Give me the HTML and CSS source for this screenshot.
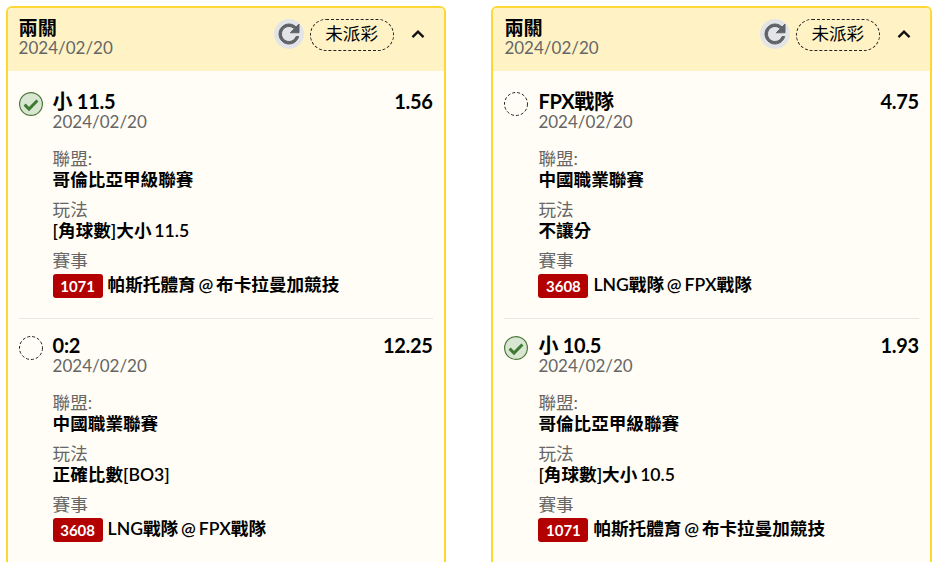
FILE: index.html
```html
<!DOCTYPE html>
<html lang="zh-Hant">
<head>
<meta charset="utf-8">
<title>兩關</title>
<link rel="stylesheet" href="styles.css">
</head>
<body>
<svg class="defs" width="0" height="0" aria-hidden="true">
  <symbol id="ok" viewBox="0 0 24 24">
    <circle cx="12" cy="12" r="11.4" fill="#d9e6d2" stroke="#4c7a3d" stroke-width="1.2"/>
    <path d="M5.6 12.6l4.4 4.4 8.4-8.5" fill="none" stroke="#3f7a32" stroke-width="3"/>
  </symbol>
  <symbol id="pending" viewBox="0 0 24 24">
    <circle cx="12" cy="12" r="11.5" fill="none" stroke="#222" stroke-width="1" stroke-dasharray="3 2"/>
  </symbol>
  <symbol id="refresh" viewBox="0 0 24 24">
    <path d="M17.65 6.35C16.2 4.9 14.21 4 12 4c-4.42 0-7.99 3.58-7.99 8s3.57 8 7.99 8c3.73 0 6.84-2.55 7.73-6h-2.08c-.82 2.33-3.04 4-5.65 4-3.31 0-6-2.69-6-6s2.69-6 6-6c1.66 0 3.14.69 4.22 1.78L13 11h7V4l-2.35 2.35z" fill="#5f6368" stroke="#5f6368" stroke-width=".8"/>
  </symbol>
  <symbol id="up" viewBox="0 0 14 10">
    <path d="M1.5 8.2l5.5-5.5 5.5 5.5" fill="none" stroke="#111" stroke-width="2.4"/>
  </symbol>
</svg>
<main class="board">
  <section class="card">
    <header class="head">
      <div class="head-text">
        <div class="head-title">兩關</div>
        <div class="date">2024/02/20</div>
      </div>
      <span class="refresh"><svg class="refresh-icon"><use href="#refresh"/></svg></span>
      <span class="status">未派彩</span>
      <svg class="chevron"><use href="#up"/></svg>
    </header>
    <div class="body">
      <article class="leg">
        <svg class="mark"><use href="#ok"/></svg>
        <div class="leg-main">
          <div class="leg-top"><span>小 11.5</span><span>1.56</span></div>
          <div class="date">2024/02/20</div>
          <div class="label first">聯盟:</div>
          <div class="value">哥倫比亞甲級聯賽</div>
          <div class="label">玩法</div>
          <div class="value">[角球數]大小 11.5</div>
          <div class="label">賽事</div>
          <div class="match"><span class="code">1071</span><span class="value">帕斯托體育 @ 布卡拉曼加競技</span></div>
        </div>
      </article>
      <article class="leg">
        <svg class="mark"><use href="#pending"/></svg>
        <div class="leg-main">
          <div class="leg-top"><span>0:2</span><span>12.25</span></div>
          <div class="date">2024/02/20</div>
          <div class="label first">聯盟:</div>
          <div class="value">中國職業聯賽</div>
          <div class="label">玩法</div>
          <div class="value">正確比數[BO3]</div>
          <div class="label">賽事</div>
          <div class="match"><span class="code">3608</span><span class="value">LNG戰隊 @ FPX戰隊</span></div>
        </div>
      </article>
    </div>
  </section>
  <section class="card">
    <header class="head">
      <div class="head-text">
        <div class="head-title">兩關</div>
        <div class="date">2024/02/20</div>
      </div>
      <span class="refresh"><svg class="refresh-icon"><use href="#refresh"/></svg></span>
      <span class="status">未派彩</span>
      <svg class="chevron"><use href="#up"/></svg>
    </header>
    <div class="body">
      <article class="leg">
        <svg class="mark"><use href="#pending"/></svg>
        <div class="leg-main">
          <div class="leg-top"><span>FPX戰隊</span><span>4.75</span></div>
          <div class="date">2024/02/20</div>
          <div class="label first">聯盟:</div>
          <div class="value">中國職業聯賽</div>
          <div class="label">玩法</div>
          <div class="value">不讓分</div>
          <div class="label">賽事</div>
          <div class="match"><span class="code">3608</span><span class="value">LNG戰隊 @ FPX戰隊</span></div>
        </div>
      </article>
      <article class="leg">
        <svg class="mark"><use href="#ok"/></svg>
        <div class="leg-main">
          <div class="leg-top"><span>小 10.5</span><span>1.93</span></div>
          <div class="date">2024/02/20</div>
          <div class="label first">聯盟:</div>
          <div class="value">哥倫比亞甲級聯賽</div>
          <div class="label">玩法</div>
          <div class="value">[角球數]大小 10.5</div>
          <div class="label">賽事</div>
          <div class="match"><span class="code">1071</span><span class="value">帕斯托體育 @ 布卡拉曼加競技</span></div>
        </div>
      </article>
    </div>
  </section>
</main>
</body>
</html>
```
FILE: styles.css
```css
* { box-sizing: border-box; }
html, body { margin: 0; height: 100%; overflow: hidden; background: #fff; }
body {
  font-family: Lato, "Noto Sans CJK TC", sans-serif;
  color: #000;
  font-size: 16px;
}
.defs { position: absolute; }
.board {
  display: grid;
  grid-template-columns: 440px 440.4px;
  column-gap: 45.8px;
  padding: 6px 0 0 5.6px;
}
.card {
  border: 2px solid #fdd835;
  border-bottom: 0;
  border-radius: 6px 6px 0 0;
  background: #fffdf5;
  overflow: hidden;
  height: 620px;
}
.head {
  display: flex;
  align-items: center;
  height: 63px;
  padding: 0 19px 10px 11px;
  background: #fff3c6;
}
.head-text { flex: 1; padding-top: 6px; }
.head-title { font-size: 19.2px; font-weight: 600; line-height: 20px; }
.date { font-size: 17px; line-height: 19px; color: #666; }
.refresh {
  width: 30px;
  height: 30px;
  border-radius: 50%;
  background: #e3e4e6;
  display: flex;
  align-items: center;
  justify-content: center;
  margin: -2px 6px 0 0;
}
.refresh-icon { width: 30px; height: 30px; }
.status {
  width: 84px;
  height: 32px;
  border: 1px dashed #222;
  border-radius: 16px;
  font-size: 17.6px;
  line-height: 28px;
  text-align: center;
  margin-right: 17px;
}
.chevron { width: 14px; height: 10px; margin-top: -2px; }
.body { padding: 19px 11px 0 11px; }
.leg { display: flex; gap: 10px; padding-bottom: 20.5px; border-bottom: 1px solid #e8e6e0; margin-bottom: 15px; }
.leg:last-child { border-bottom: 0; }
.mark { width: 24px; height: 24px; flex: none; margin-top: 2px; }
.leg-main { flex: 1; }
.leg-top { display: flex; justify-content: space-between; line-height: 22px; font-size: 20px; font-weight: 700; letter-spacing: -0.3px; }
.label { font-size: 17.6px; line-height: 21px; color: #666; margin-top: 9px; }
.label.first { margin-top: 16.5px; }
.value { font-size: 17.6px; font-weight: 600; line-height: 21px; word-spacing: -1.5px; }
.match { display: flex; align-items: center; gap: 5px; margin-top: 3px; }
.match .value { margin-top: -2px; }
.code {
  width: 50px;
  height: 24px;
  background: #b30000;
  color: #fff;
  border-radius: 3px;
  font-size: 15px;
  font-weight: 700;
  line-height: 24px;
  text-align: center;
}
```
